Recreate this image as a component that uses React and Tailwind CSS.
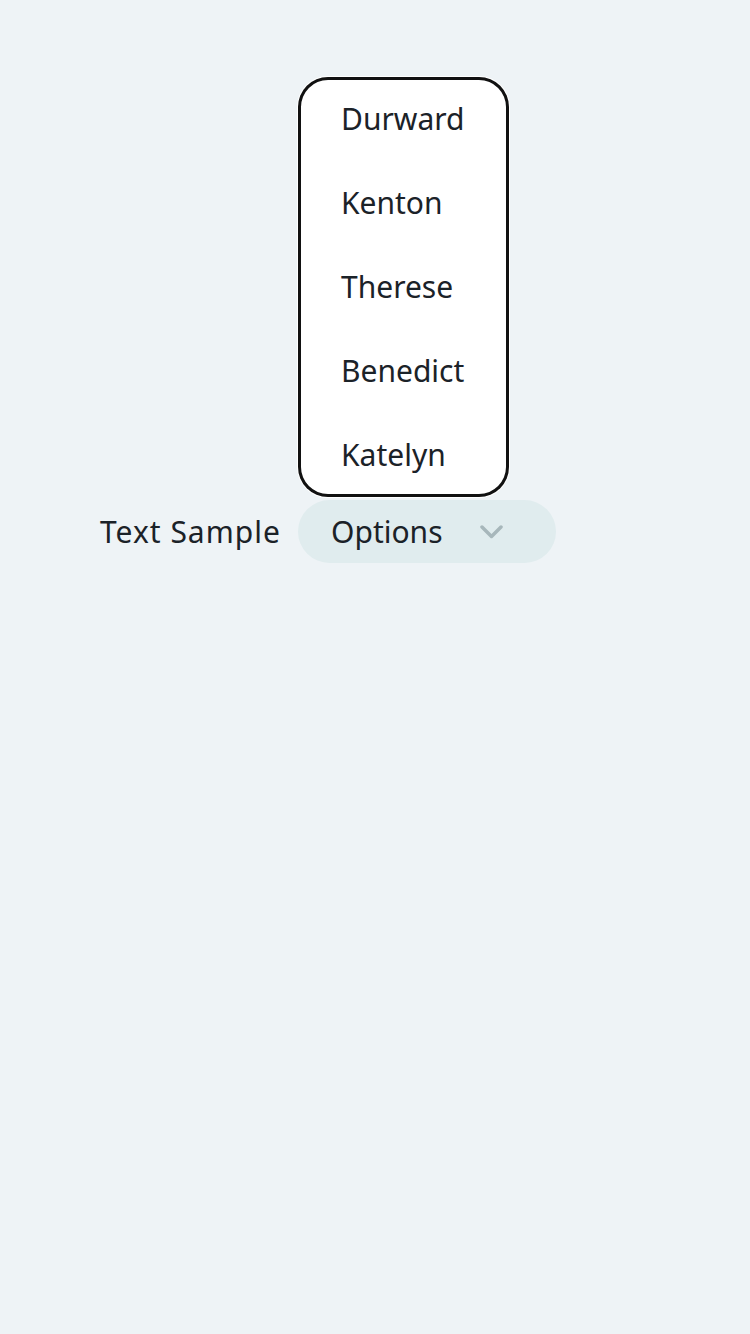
const names = ["Durward", "Kenton", "Therese", "Benedict", "Katelyn"];

export default function App() {
  return (
    <div
      className="min-h-[1334px] w-full bg-[#eef3f6] text-[#1b2228]"
      style={{ fontFamily: "'Noto Sans', 'Open Sans', sans-serif" }}
    >
      <div className="flex items-center pl-[100px] pt-[500px]">
        <span className="w-[198px] text-[30px] leading-none tracking-[1px]">Text Sample</span>
        <div className="relative">
          <div className="absolute bottom-[calc(100%+3px)] left-0 flex h-[420px] w-[211px] flex-col rounded-[30px] bg-white shadow-[inset_0_0_0_3px_#111111,0_0_0_1px_#ffffff]">
            {names.map((n) => (
              <div key={n} className="flex h-[84px] items-center pl-[43px] text-[30px] leading-none">
                {n}
              </div>
            ))}
          </div>
          <button className="flex h-[63px] w-[258px] items-center rounded-full bg-[#e0ecee] pl-[33px] text-[30px] leading-none text-[#1b2228]">
            <span>Options</span>
            <svg className="ml-auto mr-[53px]" width="23" height="14" viewBox="0 0 23 14" fill="none">
              <polyline points="2,2 11.5,11.5 21,2" stroke="#a7b7bb" strokeWidth="3.5" strokeLinecap="round" strokeLinejoin="round" />
            </svg>
          </button>
        </div>
      </div>
    </div>
  );
}
